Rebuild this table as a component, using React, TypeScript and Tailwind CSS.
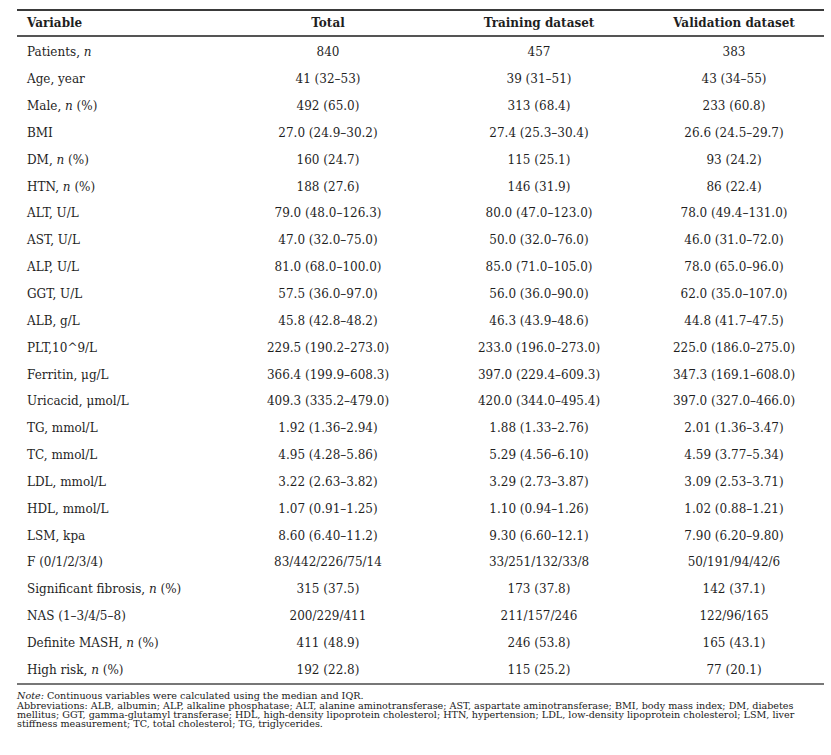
const rows: [React.ReactNode, string, string, string][] = [
  [<>Patients, <i>n</i></>, '840', '457', '383'],
  ['Age, year', '41 (32–53)', '39 (31–51)', '43 (34–55)'],
  [<>Male, <i>n</i> (%)</>, '492 (65.0)', '313 (68.4)', '233 (60.8)'],
  ['BMI', '27.0 (24.9–30.2)', '27.4 (25.3–30.4)', '26.6 (24.5–29.7)'],
  [<>DM, <i>n</i> (%)</>, '160 (24.7)', '115 (25.1)', '93 (24.2)'],
  [<>HTN, <i>n</i> (%)</>, '188 (27.6)', '146 (31.9)', '86 (22.4)'],
  ['ALT, U/L', '79.0 (48.0–126.3)', '80.0 (47.0–123.0)', '78.0 (49.4–131.0)'],
  ['AST, U/L', '47.0 (32.0–75.0)', '50.0 (32.0–76.0)', '46.0 (31.0–72.0)'],
  ['ALP, U/L', '81.0 (68.0–100.0)', '85.0 (71.0–105.0)', '78.0 (65.0–96.0)'],
  ['GGT, U/L', '57.5 (36.0–97.0)', '56.0 (36.0–90.0)', '62.0 (35.0–107.0)'],
  ['ALB, g/L', '45.8 (42.8–48.2)', '46.3 (43.9–48.6)', '44.8 (41.7–47.5)'],
  ['PLT,10^9/L', '229.5 (190.2–273.0)', '233.0 (196.0–273.0)', '225.0 (186.0–275.0)'],
  ['Ferritin, μg/L', '366.4 (199.9–608.3)', '397.0 (229.4–609.3)', '347.3 (169.1–608.0)'],
  ['Uricacid, μmol/L', '409.3 (335.2–479.0)', '420.0 (344.0–495.4)', '397.0 (327.0–466.0)'],
  ['TG, mmol/L', '1.92 (1.36–2.94)', '1.88 (1.33–2.76)', '2.01 (1.36–3.47)'],
  ['TC, mmol/L', '4.95 (4.28–5.86)', '5.29 (4.56–6.10)', '4.59 (3.77–5.34)'],
  ['LDL, mmol/L', '3.22 (2.63–3.82)', '3.29 (2.73–3.87)', '3.09 (2.53–3.71)'],
  ['HDL, mmol/L', '1.07 (0.91–1.25)', '1.10 (0.94–1.26)', '1.02 (0.88–1.21)'],
  ['LSM, kpa', '8.60 (6.40–11.2)', '9.30 (6.60–12.1)', '7.90 (6.20–9.80)'],
  ['F (0/1/2/3/4)', '83/442/226/75/14', '33/251/132/33/8', '50/191/94/42/6'],
  [<>Significant fibrosis, <i>n</i> (%)</>, '315 (37.5)', '173 (37.8)', '142 (37.1)'],
  ['NAS (1–3/4/5–8)', '200/229/411', '211/157/246', '122/96/165'],
  [<>Definite MASH, <i>n</i> (%)</>, '411 (48.9)', '246 (53.8)', '165 (43.1)'],
  [<>High risk, <i>n</i> (%)</>, '192 (22.8)', '115 (25.2)', '77 (20.1)'],
];

const cols = 'grid grid-cols-[205px_212px_210px_180px]';

export default function App() {
  return (
    <div className="w-[831px] h-[755px] bg-white text-[#1f1f1f] pt-[9px] pl-[17px]" style={{ fontFamily: '"DejaVu Serif", serif' }}>
      <div className="w-[807px]">
        <div className={`${cols} h-[28px] items-center border-t-2 border-b-2 border-t-[#3a3a3a] border-b-[#555] text-[12px] font-bold`}>
          <div className="pl-[10px]">Variable</div>
          <div className="text-center">Total</div>
          <div className="text-center">Training dataset</div>
          <div className="text-center">Validation dataset</div>
        </div>
        <div className="border-b-2 border-[#777] pt-[2px]">
          {rows.map((r, i) => (
            <div key={i} className={`${cols} h-[26.85px] items-center text-[12px]`}>
              <div className="pl-[10px] whitespace-nowrap">{r[0]}</div>
              <div className="text-center">{r[1]}</div>
              <div className="text-center">{r[2]}</div>
              <div className="text-center">{r[3]}</div>
            </div>
          ))}
        </div>
        <div className="pt-[6px] text-[9.6px] leading-[9.4px] text-[#1a1a1a] whitespace-nowrap">
          <p><i>Note:</i> Continuous variables were calculated using the median and IQR.</p>
          <p>Abbreviations: ALB, albumin; ALP, alkaline phosphatase; ALT, alanine aminotransferase; AST, aspartate aminotransferase; BMI, body mass index; DM, diabetes</p>
          <p>mellitus; GGT, gamma-glutamyl transferase; HDL, high-density lipoprotein cholesterol; HTN, hypertension; LDL, low-density lipoprotein cholesterol; LSM, liver</p>
          <p>stiffness measurement; TC, total cholesterol; TG, triglycerides.</p>
        </div>
      </div>
    </div>
  );
}
